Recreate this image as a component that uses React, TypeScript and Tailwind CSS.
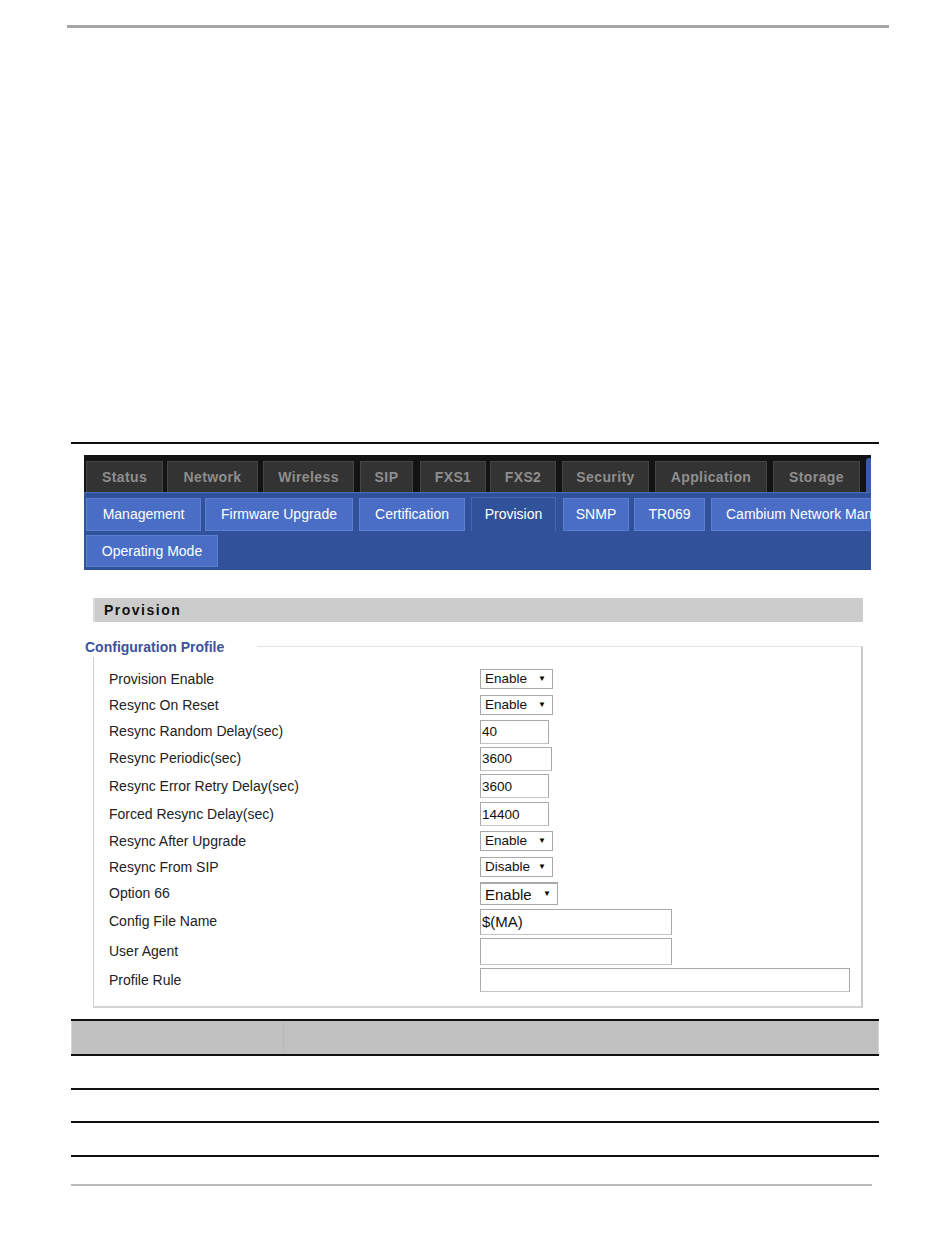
import React from "react";

const topTabs = [
  { label: "Status", cls: "w-[77px] ml-[2px]" },
  { label: "Network", cls: "w-[91px] ml-[4px]" },
  { label: "Wireless", cls: "w-[91px] ml-[5px]" },
  { label: "SIP", cls: "w-[53px] ml-[6px]" },
  { label: "FXS1", cls: "w-[66px] ml-[7px]" },
  { label: "FXS2", cls: "w-[66px] ml-[4px]" },
  { label: "Security", cls: "w-[87px] ml-[6px]" },
  { label: "Application", cls: "w-[112px] ml-[6px]" },
  { label: "Storage", cls: "w-[87px] ml-[6px]" },
];

const subTabs = [
  { label: "Management", cls: "w-[115px] ml-[2px] justify-center" },
  { label: "Firmware Upgrade", cls: "w-[148px] ml-[4px] justify-center" },
  { label: "Certification", cls: "w-[106px] ml-[6px] justify-center" },
  { label: "Provision", cls: "w-[85px] ml-[6px] justify-center", active: true },
  { label: "SNMP", cls: "w-[66px] ml-[7px] justify-center" },
  { label: "TR069", cls: "w-[71px] ml-[5px] justify-center" },
  { label: "Cambium Network Management", cls: "w-[230px] ml-[6px] justify-start pl-[14px]" },
];

type Row =
  | { label: string; kind: "select"; value: string; h: string; big?: boolean }
  | { label: string; kind: "input"; value: string; h: string; w: string; ih: string; big?: boolean };

const rows: Row[] = [
  { label: "Provision Enable", kind: "select", value: "Enable", h: "h-[26px]" },
  { label: "Resync On Reset", kind: "select", value: "Enable", h: "h-[26px]" },
  { label: "Resync Random Delay(sec)", kind: "input", value: "40", h: "h-[27px]", w: "w-[69px]", ih: "h-[24px]" },
  { label: "Resync Periodic(sec)", kind: "input", value: "3600", h: "h-[27px]", w: "w-[72px]", ih: "h-[24px]" },
  { label: "Resync Error Retry Delay(sec)", kind: "input", value: "3600", h: "h-[28px]", w: "w-[69px]", ih: "h-[24px]" },
  { label: "Forced Resync Delay(sec)", kind: "input", value: "14400", h: "h-[28px]", w: "w-[69px]", ih: "h-[24px]" },
  { label: "Resync After Upgrade", kind: "select", value: "Enable", h: "h-[26px]" },
  { label: "Resync From SIP", kind: "select", value: "Disable", h: "h-[26px]" },
  { label: "Option 66", kind: "select", value: "Enable", h: "h-[27px]", big: true },
  { label: "Config File Name", kind: "input", value: "$(MA)", h: "h-[29px]", w: "w-[192px]", ih: "h-[26px]", big: true },
  { label: "User Agent", kind: "input", value: "", h: "h-[30px]", w: "w-[192px]", ih: "h-[27px]" },
  { label: "Profile Rule", kind: "input", value: "", h: "h-[28px]", w: "w-[370px]", ih: "h-[24px]" },
];

function Select({ value, big }: { value: string; big?: boolean }) {
  return (
    <div
      className={
        big
          ? "flex items-center w-[78px] h-[23px] border border-[#a9a9a9] border-t-[2px] bg-white pl-[4px] text-[15px] text-[#111]"
          : "flex items-center w-[73px] h-[20px] border border-[#a9a9a9] bg-white pl-[4px] text-[13.5px] text-[#111]"
      }
    >
      <span className="flex-1 leading-none">{value}</span>
      <span className="text-[8px] leading-none text-black pr-[6px]">▼</span>
    </div>
  );
}

export default function App() {
  return (
    <div className="w-[950px] min-h-[1254px] bg-white flex flex-col" style={{ fontFamily: '"Liberation Sans", Arial, sans-serif' }}>
      {/* top rule */}
      <div className="mt-[25px] ml-[67px] w-[822px] h-[3px] bg-[#a6a6a6]" />

      {/* black rule */}
      <div className="mt-[414px] ml-[71px] w-[808px] h-[2px] bg-[#111]" />

      {/* screenshot */}
      <div className="mt-[11px] ml-[84px] w-[787px] overflow-hidden">
        <div className="flex items-end h-[37px] bg-[#131313] pt-[6px]">
          {topTabs.map((t) => (
            <div
              key={t.label}
              className={`${t.cls} shrink-0 h-[31px] flex items-center justify-center bg-[#333333] border-t border-l border-r border-[#454545] text-[14px] font-bold tracking-[0.4px] text-[#8e8e8e]`}
            >
              {t.label}
            </div>
          ))}
          <div className="ml-auto w-[5px] h-[34px] bg-[#3a5ca8] rounded-tl-[3px]" />
        </div>
        <div className="bg-[#31529b] border-t border-[#4a6cc0] pt-[5px] pb-[3px]">
          <div className="flex h-[33px] items-end">
            {subTabs.map((t) => (
              <div
                key={t.label}
                className={
                  t.active
                    ? `${t.cls} shrink-0 h-[34px] flex items-center bg-[#30529a] border-t border-l border-r border-[#4766b3] text-[14px] text-white whitespace-nowrap`
                    : `${t.cls} shrink-0 h-[33px] flex items-center bg-[#4a6ec6] border border-[#5b80d3] text-[14px] text-white whitespace-nowrap`
                }
              >
                {t.label}
              </div>
            ))}
          </div>
          <div className="flex mt-[4px]">
            <div className="w-[132px] ml-[2px] h-[32px] flex items-center justify-center bg-[#4a6ec6] border border-[#5b80d3] text-[14px] text-white">
              Operating Mode
            </div>
          </div>
        </div>
      </div>

      {/* Provision header */}
      <div className="mt-[28px] ml-[93px] w-[770px] h-[24px] bg-[#cccccc] border-l-[2px] border-[#dcdcdc] flex items-center pl-[9px]">
        <span className="text-[14px] font-bold tracking-[1.5px] text-[#111]">Provision</span>
      </div>

      {/* fieldset */}
      <div className="relative mt-[24px] ml-[93px] w-[770px] border-t border-[#e2e2e2] border-l border-l-[#cfcfcf] border-r-[2px] border-r-[#cacaca] border-b-[2px] border-b-[#d4d4d4] pt-[19px] pb-[12px]">
        <div className="absolute left-[-9px] top-[-10px] bg-white pr-[33px] text-[14px] font-bold text-[#3a52a0] leading-[20px]">
          Configuration Profile
        </div>
        {rows.map((r) => (
          <div key={r.label} className={`flex items-center ${r.h}`}>
            <div className="w-[386px] shrink-0 pl-[15px] text-[14px] text-[#222]">{r.label}</div>
            {r.kind === "select" ? (
              <Select value={r.value} big={r.big} />
            ) : (
              <input
                readOnly
                value={r.value}
                className={`${r.w} ${r.ih} border border-[#a9a9a9] border-b-[#c4c4c4] bg-white px-[1px] ${r.big ? "text-[15px]" : "text-[13.5px]"} text-[#111] outline-none`}
                style={{ fontFamily: '"Liberation Sans", Arial, sans-serif' }}
              />
            )}
          </div>
        ))}
      </div>

      {/* bottom table */}
      <div className="mt-[11px] ml-[71px] w-[808px]">
        <div className="h-[2px] bg-[#111]" />
        <div className="h-[33px] bg-[#c0c0c0] border-l border-r border-[#d6d6d6] flex">
          <div className="w-[212px] border-r border-[#b8b8b8]" />
          <div className="flex-1" />
        </div>
        <div className="h-[2px] bg-[#111]" />
        <div className="h-[32px]" />
        <div className="h-[2px] bg-[#111]" />
        <div className="h-[31px]" />
        <div className="h-[2px] bg-[#111]" />
        <div className="h-[32px]" />
        <div className="h-[2px] bg-[#111]" />
        <div className="mt-[27px] w-[801px] h-[2px] bg-[#bbbbbb]" />
      </div>
    </div>
  );
}
